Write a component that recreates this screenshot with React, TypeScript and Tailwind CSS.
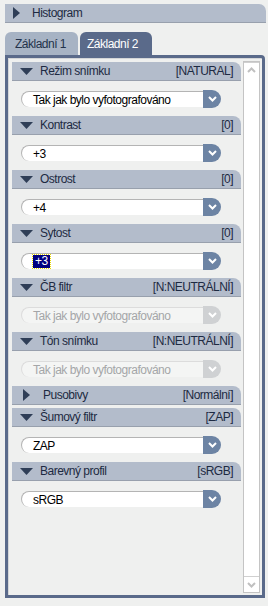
import React from 'react';

type Section = {
  title: string;
  value: string;
  open: boolean;
  option?: string;
  disabled?: boolean;
  selected?: boolean;
};

const sections: Section[] = [
  { title: 'Režim snímku', value: '[NATURAL]', open: true, option: 'Tak jak bylo vyfotografováno' },
  { title: 'Kontrast', value: '[0]', open: true, option: '+3' },
  { title: 'Ostrost', value: '[0]', open: true, option: '+4' },
  { title: 'Sytost', value: '[0]', open: true, option: '+3', selected: true },
  { title: 'ČB filtr', value: '[N:NEUTRÁLNÍ]', open: true, option: 'Tak jak bylo vyfotografováno', disabled: true },
  { title: 'Tón snímku', value: '[N:NEUTRÁLNÍ]', open: true, option: 'Tak jak bylo vyfotografováno', disabled: true },
  { title: 'Pusobivy', value: '[Normální]', open: false },
  { title: 'Šumový filtr', value: '[ZAP]', open: true, option: 'ZAP' },
  { title: 'Barevný profil', value: '[sRGB]', open: true, option: 'sRGB' },
];

const TriDown = () => (
  <svg width="13" height="7" viewBox="0 0 13 7" className="shrink-0">
    <polygon points="0,0 13,0 6.5,7" fill="#2f3e57" />
  </svg>
);

const TriRight = () => (
  <svg width="7" height="12" viewBox="0 0 7 12" className="shrink-0">
    <polygon points="0,0 7,6 0,12" fill="#2f3e57" />
  </svg>
);

const Chevron = ({ color }: { color: string }) => (
  <svg width="9" height="6" viewBox="0 0 9 6">
    <polyline points="1,1 4.5,4.5 8,1" fill="none" stroke={color} strokeWidth="2" />
  </svg>
);

const Dropdown = ({ s }: { s: Section }) => (
  <div className="flex h-[16px] w-[200px] ml-[9px]">
    <div
      className={`flex-1 flex items-center pl-[11px] rounded-l-[8px] border-l border-t ${
        s.disabled ? 'bg-[#f4f5f4] border-[#dcdcdc] text-[#a4a6a8]' : 'bg-white border-[#b4b4b4] text-black'
      }`}
    >
      {s.selected ? (
        <span className="bg-[#000080] text-white px-[2px] leading-[13px] outline-1 outline-dotted outline-[#e8d800]">
          {s.option}
        </span>
      ) : (
        <span>{s.option}</span>
      )}
    </div>
    <div
      className={`w-[18px] -my-[1px] rounded-r-[9px] flex items-center justify-center ${
        s.disabled ? 'bg-[#cfd1d3]' : 'bg-[#6d84a4]'
      }`}
    >
      <Chevron color="#ffffff" />
    </div>
  </div>
);

const SectionBlock = ({ s }: { s: Section }) => (
  <div className={s.open ? 'pb-[9px]' : 'pb-[3px]'}>
    <div className="h-[19px] bg-[#b3bccb] rounded-tr-[8px] border-b border-[#98a0ad] flex items-center pl-[8px] pr-[8px] text-[#1d2a42]">
      {s.open ? <TriDown /> : <span className="pl-[3px] pr-[3px]"><TriRight /></span>}
      <span className={s.open ? 'ml-[7px]' : 'ml-[10px]'}>{s.title}</span>
      <span className="ml-auto">{s.value}</span>
    </div>
    {s.open && (
      <div className="pt-[10px]">
        <Dropdown s={s} />
      </div>
    )}
  </div>
);

export default function App() {
  return (
    <div className="w-[268px] h-[606px] bg-[#eff0ef] overflow-hidden text-[12px] tracking-[-0.5px] font-['Liberation_Sans',Arial,sans-serif]">
      {/* Histogram */}
      <div className="pt-[4px] pl-[5px] pr-[2px]">
        <div className="h-[19px] bg-[#b3bccb] rounded-tr-[7px] border-b border-[#98a0ad] flex items-center pl-[8px] text-[#1d2a42]">
          <TriRight />
          <span className="ml-[12px]">Histogram</span>
        </div>
      </div>

      {/* Tabs */}
      <div className="flex pl-[5px] mt-[9px] h-[23px] text-[12px]">
        <div className="w-[73px] bg-[#a7b3c4] rounded-t-[6px] flex items-center pl-[10px] text-[#23324b]">
          Základní 1
        </div>
        <div className="w-[72px] ml-[2px] bg-[#5a6a8a] rounded-t-[6px] flex items-center pl-[7px] text-white">
          Základní 2
        </div>
      </div>

      {/* Panel */}
      <div className="ml-[5px] w-[260px] h-[543px] border-[3px] border-[#5a6a8a] rounded-tr-[4px] bg-[#eff0ef] flex shadow-[inset_1px_1px_0_#d4d6d8]">
        <div className="w-[229px] ml-[4px] pt-[4px]">
          {sections.map((s) => (
            <SectionBlock key={s.title} s={s} />
          ))}
        </div>
        <div className="ml-[2px] mt-[3px] w-[17px] h-[532px] bg-white border border-[#c4c4c4] flex flex-col justify-between">
          <div className="h-[16px] border-b border-[#d0d0d0] flex items-center justify-center rotate-180">
            <Chevron color="#c0c0c0" />
          </div>
          <div className="h-[16px] border-t border-[#d0d0d0] flex items-center justify-center">
            <Chevron color="#c0c0c0" />
          </div>
        </div>
      </div>
    </div>
  );
}
